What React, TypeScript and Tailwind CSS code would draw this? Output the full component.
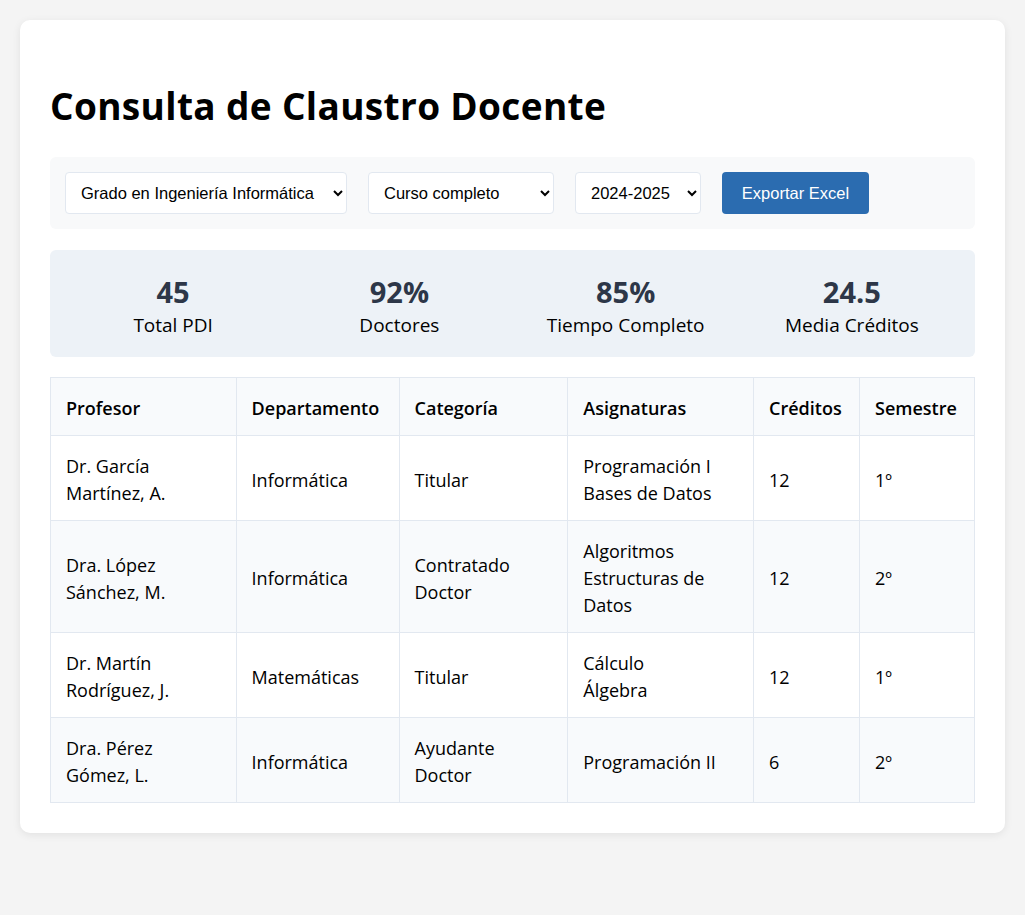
import React from 'react';

type Row = {
  profesor: string[];
  departamento: string;
  categoria: string[];
  asignaturas: string[];
  creditos: string;
  semestre: string;
};

const rows: Row[] = [
  { profesor: ['Dr. García', 'Martínez, A.'], departamento: 'Informática', categoria: ['Titular'], asignaturas: ['Programación I', 'Bases de Datos'], creditos: '12', semestre: '1º' },
  { profesor: ['Dra. López', 'Sánchez, M.'], departamento: 'Informática', categoria: ['Contratado', 'Doctor'], asignaturas: ['Algoritmos', 'Estructuras de', 'Datos'], creditos: '12', semestre: '2º' },
  { profesor: ['Dr. Martín', 'Rodríguez, J.'], departamento: 'Matemáticas', categoria: ['Titular'], asignaturas: ['Cálculo', 'Álgebra'], creditos: '12', semestre: '1º' },
  { profesor: ['Dra. Pérez', 'Gómez, L.'], departamento: 'Informática', categoria: ['Ayudante', 'Doctor'], asignaturas: ['Programación II'], creditos: '6', semestre: '2º' },
];

const stats = [
  { value: '45', label: 'Total PDI' },
  { value: '92%', label: 'Doctores' },
  { value: '85%', label: 'Tiempo Completo' },
  { value: '24.5', label: 'Media Créditos' },
];

const cell = 'border border-[#e2e8f0] px-[15px] pt-[17px] pb-[13px] align-middle text-left';

function Lines({ items }: { items: string[] }) {
  return (
    <>
      {items.map((t, i) => (
        <div key={i}>{t}</div>
      ))}
    </>
  );
}

export default function App() {
  return (
    <div className="min-h-[915px] bg-[#f4f4f4] p-5 font-['Segoe_UI','Open_Sans',sans-serif] text-black">
      <div className="rounded-[10px] bg-white px-[30px] pb-[30px] pt-[62px] shadow-[0_2px_8px_rgba(0,0,0,0.08)]">
        <h1 className="mb-[27px] text-[37px] font-bold leading-[48px] tracking-[0.35px]">Consulta de Claustro Docente</h1>

        {/* Filtros */}
        <div className="flex items-center gap-[21px] rounded-md bg-[#f8f9fa] p-[15px] font-['Liberation_Sans',Arial,sans-serif] text-[16.5px]">
          <select className="h-[42px] w-[282px] rounded border border-[#e2e8f0] bg-white pl-[11px] pr-2" defaultValue="gii">
            <option value="gii">Grado en Ingeniería Informática</option>
          </select>
          <select className="h-[42px] w-[186px] rounded border border-[#e2e8f0] bg-white pl-[11px] pr-2" defaultValue="all">
            <option value="all">Curso completo</option>
          </select>
          <select className="h-[42px] w-[126px] rounded border border-[#e2e8f0] bg-white pl-[11px] pr-2" defaultValue="2425">
            <option value="2425">2024-2025</option>
          </select>
          <button className="h-[42px] w-[147px] rounded bg-[#2b6cb0] text-white">Exportar Excel</button>
        </div>

        {/* Resumen */}
        <div className="mt-[21px] grid grid-cols-4 gap-5 rounded-md bg-[#edf2f7] px-5 pb-[19px] pt-[22px] text-center">
          {stats.map((s) => (
            <div key={s.label}>
              <div className="text-[29px] font-bold leading-[40px] text-[#2d3748]">{s.value}</div>
              <div className="text-[19px] leading-[26px]">{s.label}</div>
            </div>
          ))}
        </div>

        {/* Tabla */}
        <table className="mt-[20px] w-full border-collapse text-[18px] leading-[27px]">
          <colgroup>
            <col className="w-[186px]" />
            <col className="w-[163px]" />
            <col className="w-[169px]" />
            <col className="w-[186px]" />
            <col className="w-[106px]" />
            <col className="w-[115px]" />
          </colgroup>
          <thead>
            <tr className="bg-[#f8fafc]">
              <th className={`${cell} font-semibold`}>Profesor</th>
              <th className={`${cell} font-semibold`}>Departamento</th>
              <th className={`${cell} font-semibold`}>Categoría</th>
              <th className={`${cell} font-semibold`}>Asignaturas</th>
              <th className={`${cell} font-semibold`}>Créditos</th>
              <th className={`${cell} font-semibold`}>Semestre</th>
            </tr>
          </thead>
          <tbody>
            {rows.map((r, i) => (
              <tr key={i} className={i % 2 === 1 ? 'bg-[#f8fafc]' : 'bg-white'}>
                <td className={cell}><Lines items={r.profesor} /></td>
                <td className={cell}>{r.departamento}</td>
                <td className={cell}><Lines items={r.categoria} /></td>
                <td className={cell}><Lines items={r.asignaturas} /></td>
                <td className={cell}>{r.creditos}</td>
                <td className={cell}>{r.semestre}</td>
              </tr>
            ))}
          </tbody>
        </table>
      </div>
    </div>
  );
}
